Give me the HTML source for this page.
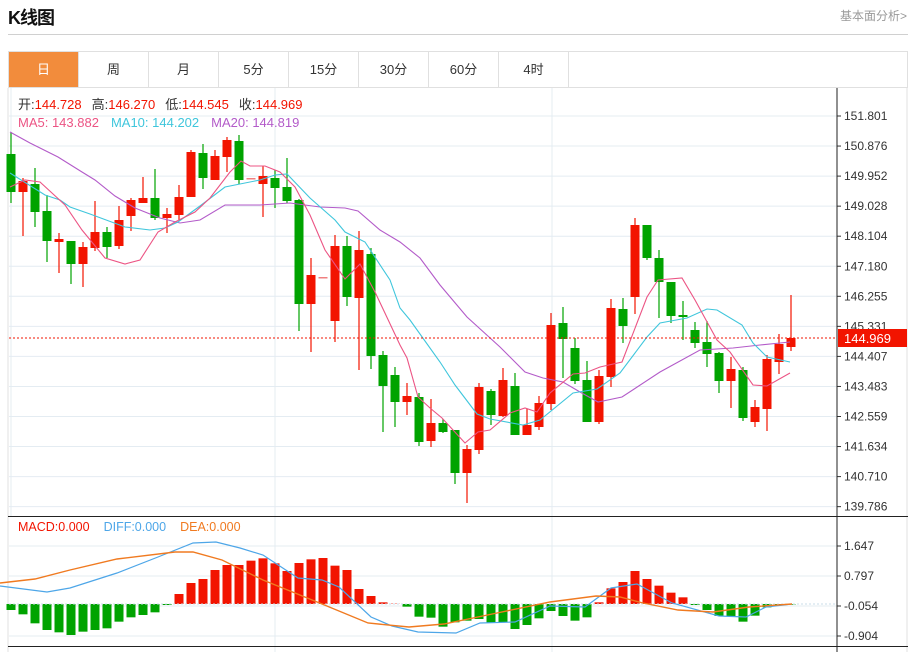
<!DOCTYPE html>
<html><head><meta charset="utf-8">
<style>
*{margin:0;padding:0;box-sizing:border-box}
body{width:913px;height:652px;background:#fff;font-family:"Liberation Sans","Noto Sans CJK SC",sans-serif;position:relative;overflow:hidden}
.title{position:absolute;left:8px;top:4px;font-size:18px;font-weight:bold;color:#111;letter-spacing:-1px}
.more{position:absolute;right:6px;top:7px;font-size:12px;color:#999}
.hr{position:absolute;left:8px;top:34px;width:900px;height:1px;background:#d0d0d0}
.tabs{position:absolute;left:8px;top:51px;width:900px;height:37px;border:1px solid #e0e0e0;display:flex}
.tabs div{width:70px;height:35px;border-right:1px solid #e0e0e0;text-align:center;line-height:35px;font-size:13px;color:#333}
.tabs div.on{background:#f28c3c;color:#fff}
svg{position:absolute;left:0;top:0}
</style></head><body>
<div class="title">K线图</div>
<div class="more">基本面分析&gt;</div>
<div class="hr"></div>
<div class="tabs"><div class="on">日</div><div>周</div><div>月</div><div>5分</div><div>15分</div><div>30分</div><div>60分</div><div>4时</div></div>
<svg id="s" width="913" height="652" xmlns="http://www.w3.org/2000/svg" font-family="Liberation Sans, Noto Sans CJK SC, sans-serif"></svg>
<script>
var s=document.getElementById('s'),h='';
h+='<line x1="8" y1="88" x2="8" y2="652" stroke="#e0e0e0"/><line x1="907" y1="88" x2="907" y2="652" stroke="#e0e0e0"/>';
var labs=["151.801","150.876","149.952","149.028","148.104","147.180","146.255","145.331","144.407","143.483","142.559","141.634","140.710","139.786"];
for(var i=0;i<14;i++){var y=116+i*30.05;h+='<line x1="9" y1="'+y+'" x2="837" y2="'+y+'" stroke="#e4ecf2"/><line x1="837" y1="'+y+'" x2="841" y2="'+y+'" stroke="#333"/><text x="844" y="'+(y+4)+'" font-size="12" fill="#333">'+labs[i]+'</text>';}
var ml=[[546,"1.647"],[576,"0.797"],[606,"-0.054"],[636,"-0.904"]];
ml.forEach(function(m){h+='<line x1="9" y1="'+m[0]+'" x2="837" y2="'+m[0]+'" stroke="#e4ecf2"/><line x1="837" y1="'+m[0]+'" x2="841" y2="'+m[0]+'" stroke="#333"/><text x="844" y="'+(m[0]+4)+'" font-size="12" fill="#333">'+m[1]+'</text>';});
h+='<line x1="275" y1="88" x2="275" y2="652" stroke="#e4ecf2"/><line x1="552" y1="88" x2="552" y2="652" stroke="#e4ecf2"/><line x1="11" y1="88" x2="11" y2="516" stroke="#e4ecf2"/>';
h+='<line x1="837" y1="88" x2="837" y2="652" stroke="#222"/>';
h+='<line x1="8" y1="516.5" x2="908" y2="516.5" stroke="#222"/><line x1="8" y1="646.5" x2="908" y2="646.5" stroke="#222"/>';
var C=[[0,154,192,132,203],[1,181,192,178,236],[0,184,212,168,227],[0,211,241,195,262],[1,239,242,233,273],[0,241,264,241,284],[1,247,264,242,287],[1,232,248,201,251],[0,232,247,227,258],[1,220,246,206,249],[1,200,216,198,231],[1,198,203,177,203],[0,198,218,169,220],[1,214,218,208,233],[1,197,215,185,220],[1,152,197,150,197],[0,153,178,144,189],[1,156,180,150,180],[1,140,157,137,172],[0,141,180,135,184],[2,178,179,178,179],[1,176,184,166,217],[0,178,188,170,208],[0,187,201,158,203],[0,200,304,199,331],[1,275,304,258,352],[2,277,278,277,278],[1,246,321,235,342],[0,246,297,236,306],[1,250,298,231,370],[0,254,356,248,369],[0,355,386,351,432],[0,375,402,367,427],[1,396,402,383,415],[0,397,442,393,446],[1,423,441,399,447],[0,423,432,419,433],[0,430,473,430,484],[1,449,473,445,503],[1,387,450,383,454],[0,391,415,389,425],[1,380,416,368,417],[0,386,435,373,435],[1,425,435,409,435],[1,403,427,396,430],[1,325,404,313,410],[0,323,339,307,378],[0,348,381,338,384],[0,380,422,361,422],[1,376,422,370,424],[1,308,377,299,387],[0,309,326,298,343],[1,225,297,218,314],[0,225,258,225,260],[0,258,282,250,318],[0,282,316,282,323],[0,315,317,301,340],[0,330,343,322,348],[0,342,354,321,367],[0,353,381,352,393],[1,369,381,357,408],[0,370,418,367,421],[1,407,422,400,427],[1,359,409,355,431],[1,344,362,334,374],[1,338,347,295,351]];
C.forEach(function(c,i){var x=11+12*i,col=c[0]==1?'#f21400':c[0]==0?'#00a300':'#f08080';
h+='<line x1="'+x+'" y1="'+c[3]+'" x2="'+x+'" y2="'+c[4]+'" stroke="'+col+'" stroke-width="1.2"/>';
h+='<rect x="'+(x-4.5)+'" y="'+c[1]+'" width="9" height="'+Math.max(1.5,c[2]-c[1])+'" fill="'+col+'"/>';});
function pl(p,col,w){return '<polyline fill="none" stroke="'+col+'" stroke-width="'+(w||1.1)+'" points="'+p+'"/>';}
h+=pl("10,132 30,143 58,157 82,172 95,180 115,196 135,208 160,218 180,223 200,220 225,205 260,205 290,203 320,207 345,208 358,211 380,230 400,242 420,258 440,285 467,317 500,347 525,372 543,378 563,382 580,392 598,402 622,397 660,372 700,350 733,348 760,345 790,342","#b35bc9");
h+=pl("10,173 45,195 60,200 70,207 90,214 125,227 150,230 165,228 178,222 200,206 225,187 260,180 275,175 287,174 310,198 335,220 345,232 365,242 390,280 400,308 410,320 440,362 455,385 477,414 490,419 523,425 540,420 573,393 597,389 620,373 647,337 660,323 687,318 707,309 717,310 742,325 753,343 767,357 790,362","#3fc6dc");
h+=pl("10,187 25,180 40,182 65,205 82,230 105,258 125,264 140,260 158,232 175,222 195,212 210,198 230,172 241,161 250,166 265,166 280,172 295,187 310,215 325,250 345,279 360,264 375,292 400,345 407,358 418,397 430,408 442,418 465,443 478,432 490,430 510,413 525,408 537,412 550,393 573,374 585,373 600,367 622,362 647,297 658,280 682,278 695,300 717,340 730,352 753,385 767,386 790,373","#ec5484");
h+='<line x1="9" y1="338" x2="837" y2="338" stroke="#f21400" stroke-dasharray="2,2"/>';
h+='<rect x="838" y="329" width="69" height="18" fill="#f21400"/><text x="844" y="343" font-size="13" fill="#fff">144.969</text>';
h+='<text x="18" y="109" font-size="13"><tspan fill="#333">开:</tspan><tspan fill="#f21400">144.728</tspan><tspan fill="#333" dx="10">高:</tspan><tspan fill="#f21400">146.270</tspan><tspan fill="#333" dx="10">低:</tspan><tspan fill="#f21400">144.545</tspan><tspan fill="#333" dx="10">收:</tspan><tspan fill="#f21400">144.969</tspan></text>';
h+='<text x="18" y="127" font-size="13"><tspan fill="#ec5484">MA5: 143.882</tspan><tspan fill="#3fc6dc" dx="12">MA10: 144.202</tspan><tspan fill="#b35bc9" dx="12">MA20: 144.819</tspan></text>';
h+='<text x="18" y="531" font-size="12.5"><tspan fill="#f21400">MACD:0.000</tspan><tspan fill="#4da6e8" dx="14">DIFF:0.000</tspan><tspan fill="#f07a20" dx="14">DEA:0.000</tspan></text>';
var M={};var g1=[330,343,370,390,397,405,395,390,385,365,352,345,337,315];g1.forEach(function(v,i){M[i]=v});
var r1=[282,249,237,210,195,195,182,175,190,213,189,178,174,197,210,267,288,307,311];r1.forEach(function(v,i){M[14+i]=v});
var g2=[320,350,353,380,367,362,357,368,367,387,375,355,333,348,362,352];g2.forEach(function(v,i){M[33+i]=v});
var r2=[307,265,246,213,237,257,278,292];r2.forEach(function(v,i){M[49+i]=v});
var g3=[315,330,348,348,365,347,322,315,314];g3.forEach(function(v,i){M[57+i]=v});
var z=604;
for(var i=0;i<66;i++){if(M[i]===undefined)continue;var y=500+M[i]/3,x=11+12*i-4.5;
if(y>z)h+='<rect x="'+x+'" y="'+z+'" width="9" height="'+(y-z)+'" fill="#00a300"/>';else h+='<rect x="'+x+'" y="'+y+'" width="9" height="'+(z-y)+'" fill="#f21400"/>';}
h+='<line x1="9" y1="604" x2="837" y2="604" stroke="#c8dce8" stroke-dasharray="2,2"/>';
h+=pl("0,586 47,592 70,588 117,573 158,557 193,543 216,542 240,548 263,555 298,578 322,580 339,587 371,617 392,626 418,632 456,633 480,623 515,622 550,606 585,607 611,588 637,584 672,603 719,616 746,617 766,607 792,604","#4da6e8",1.2);
h+=pl("0,583 35,579 70,570 117,559 175,552 193,552 222,560 263,580 322,604 368,623 409,627 444,624 497,613 550,602 596,596 620,597 643,603 678,610 713,612 749,607 792,604","#f07a20",1.4);
s.innerHTML=h;
</script>
</body></html>
